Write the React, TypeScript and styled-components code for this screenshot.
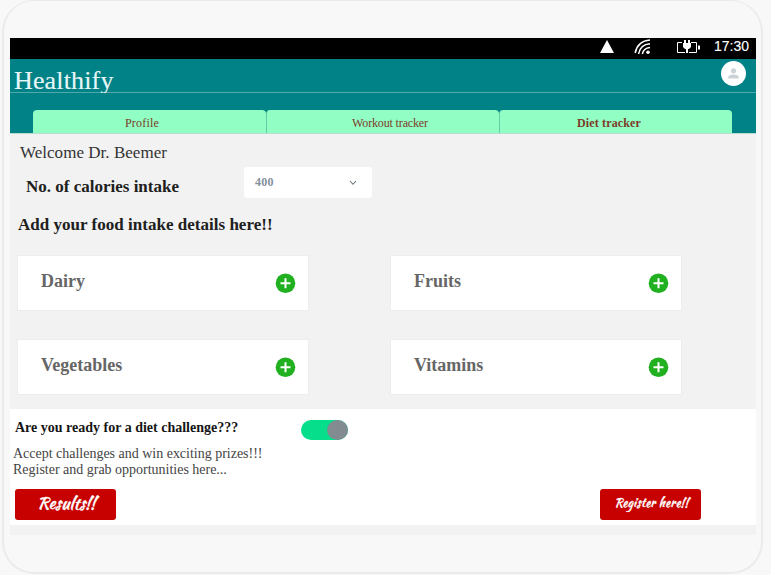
import React from 'react';
import styled, { createGlobalStyle } from 'styled-components';

const GlobalStyle = createGlobalStyle`
  * { box-sizing: border-box; }
  body { margin: 0; background: #f8f8f8; overflow: hidden; font-family: "Liberation Serif", "Times New Roman", serif; }
`;

const Page = styled.div`
  width: 771px;
  height: 575px;
  padding-left: 2px;
  background: #f8f8f8;
`;

const Device = styled.main`
  width: 761px;
  height: 574px;
  padding: 37px 0 0 6px;
  border: 2px solid #ebebeb;
  border-top-width: 1px;
  border-radius: 32px;
  background: #f8f8f8;
`;

const Screen = styled.div`
  width: 746px;
  height: 497px;
  display: flex;
  flex-direction: column;
  background: #f2f2f2;
`;

const StatusBar = styled.div`
  height: 21px;
  flex: none;
  display: flex;
  align-items: flex-start;
  justify-content: flex-end;
  padding-right: 7px;
  background: #000;
`;

const Clock = styled.span`
  margin-left: 14px;
  font: 14px/17px "Liberation Sans", Arial, sans-serif;
  color: #fff;
  -webkit-text-stroke: 0.1px #fff;
`;

const Icon = styled.svg<{ $ml?: number; $mt?: number }>`
  display: block;
  flex: none;
  margin-left: ${p => p.$ml ?? 0}px;
  margin-top: ${p => p.$mt ?? 0}px;
`;

const Header = styled.header`
  height: 34px;
  flex: none;
  display: flex;
  justify-content: space-between;
  padding: 0 9px 0 4px;
  background: #008287;
  border-bottom: 1px solid #4fa9ac;
`;

const Brand = styled.h1`
  margin: 7px 0 0;
  font-size: 26px;
  line-height: 30px;
  font-weight: 400;
  letter-spacing: 0.15px;
  color: #e9f6f7;
  -webkit-text-stroke: 0.15px #e9f6f7;
`;

const Avatar = styled.div`
  width: 25px;
  height: 25px;
  margin: 2px 1px 0 0;
  border-radius: 50%;
  background: #fff;
`;

const TabBar = styled.nav`
  height: 41px;
  flex: none;
  display: flex;
  padding: 17px 24px 0 23px;
  background: #008287;
  border-bottom: 1px solid #b9dcd0;
`;

const Tab = styled.div<{ $active?: boolean; $spacing: number; $left?: number; $right?: number }>`
  width: 233px;
  border-radius: 4px 4px 0 0;
  background: #91ffc3;
  text-align: center;
  padding: 0 ${p => p.$right ?? 0}px 0 ${p => p.$left ?? 0}px;
  font-size: 12px;
  line-height: 27px;
  white-space: nowrap;
  letter-spacing: ${p => p.$spacing}px;
  font-weight: ${p => (p.$active ? 700 : 400)};
  color: #7c3b2a;
  & + & { border-left: 1px solid #68caa5; }
`;

const Content = styled.section`
  height: 275px;
  flex: none;
`;

const Welcome = styled.p`
  height: 32px;
  margin: 0;
  padding: 9px 0 0 10px;
  font-size: 17px;
  line-height: 20px;
  letter-spacing: 0.03px;
  color: #333;
`;

const CalorieRow = styled.div`
  height: 32px;
  display: flex;
`;

const CalorieLabel = styled.label`
  width: 234px;
  padding: 11px 0 0 16px;
  font-size: 17px;
  line-height: 20px;
  font-weight: 700;
  color: #202020;
`;

const Select = styled.div`
  width: 128px;
  height: 31px;
  margin-top: 1px;
  display: flex;
  align-items: center;
  justify-content: space-between;
  padding: 0 15px 0 11px;
  border-radius: 3px;
  background: #fff;
  font-size: 12px;
  font-weight: 700;
  letter-spacing: 0.2px;
  color: #84919c;
`;

const FoodHeading = styled.h2`
  height: 58px;
  margin: 0;
  padding: 17px 0 0 8px;
  font-size: 17px;
  line-height: 20px;
  font-weight: 700;
  letter-spacing: 0.02px;
  color: #202020;
`;

const FoodGrid = styled.div`
  display: grid;
  grid-template-columns: 290px 290px;
  column-gap: 83px;
  row-gap: 30px;
  padding-left: 8px;
`;

const FoodCard = styled.article`
  height: 54px;
  display: flex;
  justify-content: space-between;
  padding: 0 12px 0 23px;
  background: #fff;
  box-shadow: 0 0 0 1px #ededed;
`;

const FoodName = styled.span`
  margin-top: 15px;
  font-size: 18px;
  line-height: 20px;
  font-weight: 700;
  color: #666;
`;

const Challenge = styled.section`
  height: 116px;
  flex: none;
  background: #fff;
`;

const ChallengeTop = styled.div`
  height: 36px;
  display: flex;
`;

const ChallengeTitle = styled.h3`
  width: 291px;
  margin: 0;
  padding: 10px 0 0 5px;
  font-size: 14px;
  line-height: 17px;
  color: #151515;
`;

const Switch = styled.div`
  width: 47px;
  height: 20px;
  margin-top: 11px;
  display: flex;
  justify-content: flex-end;
  border-radius: 10px;
  background: #06de8c;
`;

const Knob = styled.span`
  width: 21px;
  height: 20px;
  border-radius: 50%;
  background: #818b90;
`;

const ChallengeText = styled.p`
  height: 16px;
  margin: 0;
  padding-left: 3px;
  font-size: 14px;
  line-height: 17px;
  letter-spacing: -0.01px;
  color: #444;
`;

const Actions = styled.div`
  display: flex;
  justify-content: space-between;
  margin-top: 12px;
  padding: 0 55px 0 5px;
`;

const ActionButton = styled.button<{ $size: number; $spacing: number }>`
  width: 101px;
  height: 31px;
  padding: 0 0 3px 2px;
  border: 0;
  border-radius: 3px;
  background: #c70000;
  color: #fff;
  font: 400 ${p => p.$size}px/28px "Kaushan Script", "Brush Script MT", cursive;
  letter-spacing: ${p => p.$spacing}px;
  -webkit-text-stroke: 0.3px #fff;
  white-space: nowrap;
`;

const foods = ['Dairy', 'Fruits', 'Vegetables', 'Vitamins'];

function AddIcon() {
  return (
    <Icon width="21" height="21" viewBox="0 0 21 21" $mt={17} aria-label="Add">
      <circle cx="10.5" cy="10.2" r="9.8" fill="#20b020" />
      <path d="M10.5 5.2v10M5.5 10.2h10" stroke="#fff" strokeWidth="2" />
    </Icon>
  );
}

export default function App() {
  return (
    <Page>
      <GlobalStyle />
      <Device>
        <Screen>
          <StatusBar>
            <Icon width="14" height="13" viewBox="0 0 14 13" $mt={2}>
              <path d="M7 0 14 13H0Z" fill="#fff" />
            </Icon>
            <Icon width="17" height="16" viewBox="0 0 17 16" $ml={20} $mt={1}>
              <g fill="none" stroke="#fff" strokeWidth="1.5">
                <path d="M1.2 14C2.6 6.5 8 1.6 16 1M4.6 15C5.5 9.5 9.5 5.3 16 4.8M8.3 15C9 11.5 11.5 9 16 8.5" />
              </g>
              <circle cx="14" cy="13.3" r="1.8" fill="#fff" />
            </Icon>
            <Icon width="24" height="14" viewBox="0 0 24 14" $ml={25} $mt={2}>
              <path d="M6 2.5H1.5v10H9M15 2.5h5.5v10H13" fill="none" stroke="#fff" />
              <path d="M7 3h1V0h2v3h2V0h2v3h1v4l-2 2h-1v4h-2V9H9L7 7Z" fill="#fff" />
              <path d="M22 5.5h2v4h-2z" fill="#fff" />
            </Icon>
            <Clock>17:30</Clock>
          </StatusBar>
          <Header>
            <Brand>Healthify</Brand>
            <Avatar>
              <Icon width="25" height="25" viewBox="0 0 25 25">
                <circle cx="12.5" cy="9.8" r="2.6" fill="#cbd3d6" />
                <path d="M7.2 17.5v-1c0-2 3.2-2.9 5.3-2.9s5.3.9 5.3 2.9v1Z" fill="#cbd3d6" />
              </Icon>
            </Avatar>
          </Header>
          <TabBar>
            <Tab $spacing={0.2} $right={15}>Profile</Tab>
            <Tab $spacing={-0.15} $left={14}>Workout tracker</Tab>
            <Tab $spacing={0.15} $right={14} $active>Diet tracker</Tab>
          </TabBar>
          <Content>
            <Welcome>Welcome Dr. Beemer</Welcome>
            <CalorieRow>
              <CalorieLabel>No. of calories intake</CalorieLabel>
              <Select>
                400
                <Icon width="8" height="6" viewBox="0 0 8 6">
                  <path d="m1 1 3 3.3L7 1" fill="none" stroke="#69757c" strokeWidth="1.1" />
                </Icon>
              </Select>
            </CalorieRow>
            <FoodHeading>Add your food intake details here!!</FoodHeading>
            <FoodGrid>
              {foods.map(name => (
                <FoodCard key={name}>
                  <FoodName>{name}</FoodName>
                  <AddIcon />
                </FoodCard>
              ))}
            </FoodGrid>
          </Content>
          <Challenge>
            <ChallengeTop>
              <ChallengeTitle>Are you ready for a diet challenge???</ChallengeTitle>
              <Switch><Knob /></Switch>
            </ChallengeTop>
            <ChallengeText>Accept challenges and win exciting prizes!!!</ChallengeText>
            <ChallengeText>Register and grab opportunities here...</ChallengeText>
            <Actions>
              <ActionButton $size={17} $spacing={0}>Results!!</ActionButton>
              <ActionButton $size={12} $spacing={0.3}>Register here!!</ActionButton>
            </Actions>
          </Challenge>
        </Screen>
      </Device>
    </Page>
  );
}
